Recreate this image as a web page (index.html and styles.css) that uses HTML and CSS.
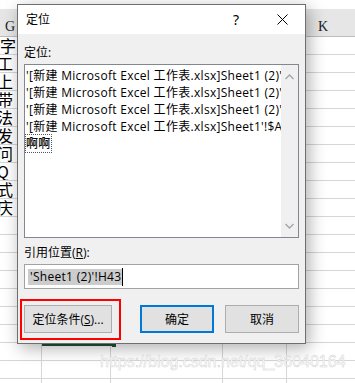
FILE: index.html
```html
<!DOCTYPE html>
<html>
<head>
<meta charset="utf-8">
<link rel="stylesheet" href="styles.css">
</head>
<body>
<div class="screen">
  <div class="sheet">
    <div class="topgap"></div>
    <div class="hdr"><span class="hdr-g">G</span><span class="hdr-k">K</span></div>
    <div class="rows">
      <div class="row"><div class="cell c1"><span class="clip">字</span></div><div class="cell c2"></div><div class="cell c3"></div><div class="cell c4"></div><div class="cell c5"></div></div>
      <div class="row"><div class="cell c1"><span class="clip shift">工</span></div><div class="cell c2"></div><div class="cell c3"></div><div class="cell c4"></div><div class="cell c5"></div></div>
      <div class="row"><div class="cell c1"><span class="clip shift">上</span></div><div class="cell c2"></div><div class="cell c3"></div><div class="cell c4"></div><div class="cell c5"></div></div>
      <div class="row"><div class="cell c1"><span class="clip shift">带</span></div><div class="cell c2"></div><div class="cell c3"></div><div class="cell c4"></div><div class="cell c5"></div></div>
      <div class="row"><div class="cell c1"><span class="clip shift">法</span></div><div class="cell c2"></div><div class="cell c3"></div><div class="cell c4"></div><div class="cell c5"></div></div>
      <div class="row"><div class="cell c1"><span class="clip shift">发</span></div><div class="cell c2"></div><div class="cell c3"></div><div class="cell c4"></div><div class="cell c5"></div></div>
      <div class="row"><div class="cell c1"><span class="clip shift">问</span></div><div class="cell c2"></div><div class="cell c3"></div><div class="cell c4"></div><div class="cell c5"></div></div>
      <div class="row"><div class="cell c1"><span class="clip shift">Q</span></div><div class="cell c2"></div><div class="cell c3"></div><div class="cell c4"></div><div class="cell c5"></div></div>
      <div class="row"><div class="cell c1"><span class="clip shift">式</span></div><div class="cell c2"></div><div class="cell c3"></div><div class="cell c4"></div><div class="cell c5"></div></div>
      <div class="row"><div class="cell c1"><span class="clip shift">庆</span></div><div class="cell c2"></div><div class="cell c3"></div><div class="cell c4"></div><div class="cell c5"></div></div>
      <div class="row"><div class="cell c1"></div><div class="cell c2"></div><div class="cell c3"></div><div class="cell c4"></div><div class="cell c5"></div></div>
      <div class="row"><div class="cell c1"></div><div class="cell c2"></div><div class="cell c3"></div><div class="cell c4"></div><div class="cell c5"></div></div>
      <div class="row"><div class="cell c1"></div><div class="cell c2"></div><div class="cell c3"></div><div class="cell c4"></div><div class="cell c5"></div></div>
      <div class="row"><div class="cell c1"></div><div class="cell c2"></div><div class="cell c3"></div><div class="cell c4"></div><div class="cell c5"></div></div>
      <div class="row"><div class="cell c1"></div><div class="cell c2"></div><div class="cell c3"></div><div class="cell c4"></div><div class="cell c5"></div></div>
      <div class="row"><div class="cell c1"></div><div class="cell c2"></div><div class="cell c3"></div><div class="cell c4"></div><div class="cell c5"></div></div>
      <div class="row"><div class="cell c1"></div><div class="cell c2"></div><div class="cell c3"></div><div class="cell c4"></div><div class="cell c5"></div></div>
      <div class="row"><div class="cell c1"></div><div class="cell c2"></div><div class="cell c3"></div><div class="cell c4"></div><div class="cell c5"></div></div>
      <div class="row"><div class="cell c1"></div><div class="cell c2"></div><div class="cell c3"></div><div class="cell c4"></div><div class="cell c5"></div></div>
      <div class="row"><div class="cell c1"></div><div class="cell c2"></div><div class="cell c3"></div><div class="cell c4"></div><div class="cell c5"></div></div>
    </div>
  </div>

  <div class="selline"><span class="handle"></span></div>

  <div class="dialog">
    <div class="titlebar">
      <span class="title">定位</span>
      <span class="tbtn help">?</span>
      <span class="tbtn close">
        <svg width="11" height="11" viewBox="0 0 11 11"><path d="M0.5 0.5 L10.5 10.5 M10.5 0.5 L0.5 10.5" stroke="#000" stroke-width="1" fill="none"/></svg>
      </span>
    </div>
    <div class="body">
      <div class="label first">定位:</div>
      <div class="listbox">
        <div class="items">
          <div class="item">'[新建 Microsoft Excel 工作表.xlsx]Sheet1 (2)'!$H$43</div>
          <div class="item">'[新建 Microsoft Excel 工作表.xlsx]Sheet1 (2)'!$H$43</div>
          <div class="item">'[新建 Microsoft Excel 工作表.xlsx]Sheet1 (2)'!$H$43</div>
          <div class="item">'[新建 Microsoft Excel 工作表.xlsx]Sheet1'!$A$1</div>
          <div class="item"><span class="focus">啊啊</span></div>
        </div>
        <div class="scrollbar">
          <svg class="arrow" width="9" height="6" viewBox="0 0 9 6"><path d="M0.5 5 L4.5 1 L8.5 5" stroke="#a6a6a6" stroke-width="1.4" fill="none"/></svg>
          <svg class="arrow" width="9" height="6" viewBox="0 0 9 6"><path d="M0.5 1 L4.5 5 L8.5 1" stroke="#a6a6a6" stroke-width="1.4" fill="none"/></svg>
        </div>
      </div>
      <div class="label second">引用位置(<u>R</u>):</div>
      <div class="input"><span class="sel">'Sheet1 (2)'!H43</span><span class="caret"></span></div>
      <div class="buttons">
        <div class="btn wide">定位条件(<u>S</u>)...</div>
        <div class="btn primary">确定</div>
        <div class="btn">取消</div>
      </div>
    </div>
  </div>

  <div class="annot"></div>
  <div class="watermark">https://blog.csdn.net/qq_36040164</div>
</div>
</body>
</html>
```

FILE: styles.css
```css
* { box-sizing: border-box; }
html, body { margin: 0; padding: 0; }
body { background: #fff; }

.screen {
  position: relative;
  width: 355px;
  height: 383px;
  overflow: hidden;
  background: #fff;
  font-family: "Open Sans", "Noto Sans CJK SC", sans-serif;
}

/* spreadsheet behind */
.sheet { display: flex; flex-direction: column; }
.topgap { height: 9px; background: #fff; }
.hdr {
  height: 28px;
  background: #e6e6e6;
  border-bottom: 1px solid #bdbdbd;
  display: flex;
  align-items: flex-end;
  font-family: "Liberation Serif", serif;
  font-size: 14px;
  color: #222;
  padding-bottom: 1px;
}
.hdr-g { margin-left: 5px; }
.hdr-k { margin-left: auto; margin-right: 27px; }

.rows { display: flex; flex-direction: column; }
.row {
  display: grid;
  grid-template-columns: 42px 69px 112px 64px 1fr;
  height: 18px;
  border-bottom: 1px solid #d6d6d6;
}
.cell { border-right: 1px solid #d6d6d6; overflow: hidden; }
.cell.c5 { border-right: none; }
.c1 {
  font-family: "Noto Sans CJK SC", sans-serif;
  font-size: 16px;
  line-height: 17px;
  white-space: nowrap;
  color: #000;
}
.clip { display: block; margin-left: 0; }
.clip.shift { margin-left: -3px; }

.selline {
  position: absolute;
  left: 42px;
  top: 344px;
  width: 71px;
  height: 2px;
  background: #1f5132;
}
.handle {
  position: absolute;
  right: -3px;
  top: -1px;
  width: 4px;
  height: 4px;
  background: #1f5132;
}

/* dialog */
.dialog {
  position: absolute;
  left: 17px;
  top: 4px;
  width: 289px;
  height: 340px;
  border: 1px solid #6f6f6f;
  background: #f0f0f0;
  box-shadow: 3px 4px 16px rgba(0, 0, 0, 0.32);
  display: flex;
  flex-direction: column;
  font-size: 12px;
  color: #000;
}
.titlebar {
  height: 29px;
  background: #fff;
  display: flex;
  align-items: center;
  padding-left: 8px;
}
.title { font-size: 12px; line-height: 16px; }
.tbtn {
  width: 46px;
  height: 29px;
  display: flex;
  align-items: center;
  justify-content: center;
}
.help { margin-left: auto; font-size: 14px; font-family: "Noto Sans", sans-serif; }

.body {
  flex: 1;
  padding: 0 6px;
  display: flex;
  flex-direction: column;
}
.label { line-height: 17px; height: 17px; white-space: nowrap; }
.label.first { margin-top: 10px; margin-bottom: 3px; }
.label.second { margin-top: 6px; margin-bottom: 3px; }
.label u, .btn u { text-underline-offset: 1px; }

.listbox {
  height: 174px;
  border: 1px solid #828790;
  background: #fff;
  display: flex;
}
.items {
  flex: 1;
  overflow: hidden;
  padding: 2px 0 0 1px;
  letter-spacing: 0.3px;
}
.item {
  line-height: 17px;
  height: 17px;
  white-space: nowrap;
}
.focus {
  outline: 1px dotted #555;
  outline-offset: 0;
  font-weight: 500;
}
.scrollbar {
  width: 17px;
  background: #f0f0f0;
  display: flex;
  flex-direction: column;
  align-items: center;
  justify-content: space-between;
  padding: 9px 0 8px;
}
.arrow { display: block; }

.input {
  height: 25px;
  border: 1px solid #a2a2a2;
  background: #fff;
  display: flex;
  align-items: center;
  padding-left: 3px;
  letter-spacing: 0.3px;
}
.sel {
  background: #cccccc;
  line-height: 16px;
  height: 16px;
  padding: 0 1px 0 2px;
  white-space: nowrap;
}
.caret { width: 1px; height: 18px; background: #000; }

.buttons {
  margin-top: 16px;
  display: flex;
  gap: 11px;
}
.btn {
  width: 74px;
  height: 28px;
  background: #e1e1e1;
  border: 1px solid #adadad;
  display: flex;
  align-items: center;
  justify-content: center;
  white-space: nowrap;
}
.btn.wide { width: 88px; margin-right: 17px; }
.btn.primary { border: 2px solid #0078d7; }

.annot {
  position: absolute;
  left: 20px;
  top: 299px;
  width: 101px;
  height: 41px;
  border: 2px solid #ff0000;
}

.watermark {
  position: absolute;
  left: 100px;
  top: 353px;
  font-family: "Liberation Sans", sans-serif;
  font-size: 16px;
  line-height: 18px;
  color: #fcfcfc;
  -webkit-text-stroke: 0.4px #cfcfcf;
  white-space: nowrap;
}
```
